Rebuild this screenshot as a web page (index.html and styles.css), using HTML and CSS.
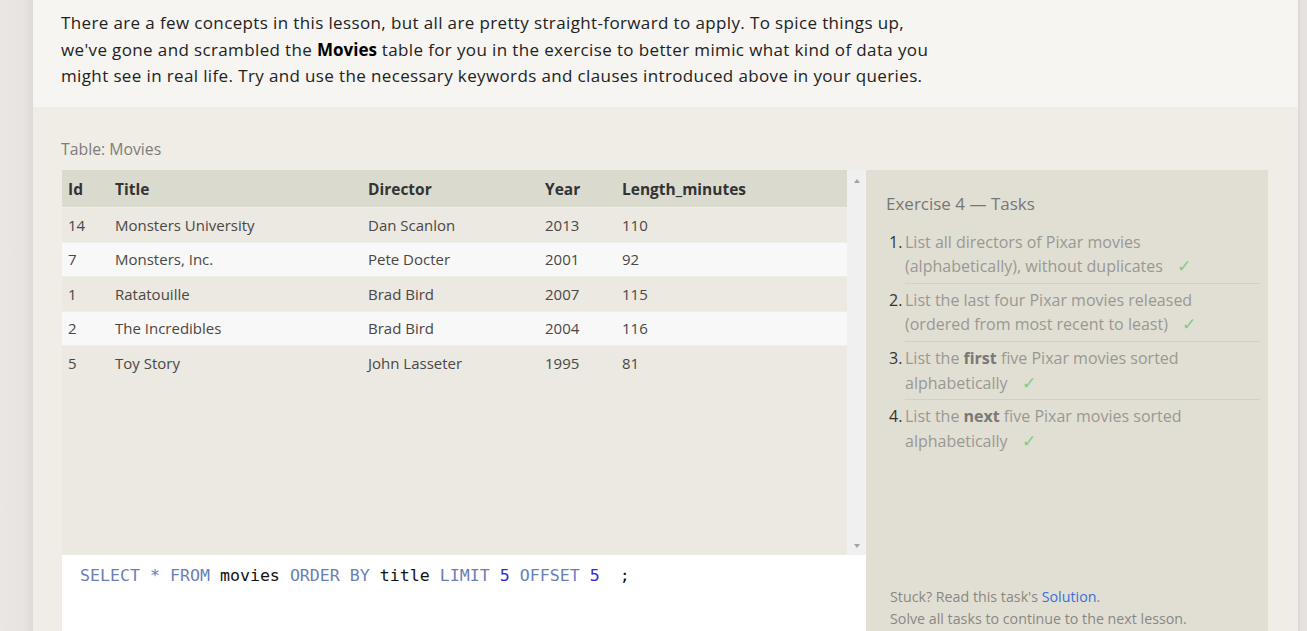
FILE: index.html
```html
<!DOCTYPE html>
<html lang="en">
<head>
<meta charset="utf-8">
<title>SQL Lesson</title>
<link rel="stylesheet" href="styles.css">
</head>
<body>
<div class="page">
  <div class="gutter-left"></div>
  <main class="card">
    <section class="intro">
      <p>There are a few concepts in this lesson, but all are pretty straight-forward to apply. To spice things up,<br>we've gone and scrambled the <strong>Movies</strong> table for you in the exercise to better mimic what kind of data you<br>might see in real life. Try and use the necessary keywords and clauses introduced above in your queries.</p>
    </section>
    <section class="exercise">
      <div class="table-label">Table: Movies</div>
      <div class="workspace">
        <div class="left">
          <div class="table-view">
            <div class="table-scroll">
              <table class="movies">
                <thead>
                  <tr><th class="c-id">Id</th><th class="c-title">Title</th><th class="c-dir">Director</th><th class="c-year">Year</th><th class="c-len">Length_minutes</th></tr>
                </thead>
                <tbody>
                  <tr><td>14</td><td>Monsters University</td><td>Dan Scanlon</td><td>2013</td><td>110</td></tr>
                  <tr><td>7</td><td>Monsters, Inc.</td><td>Pete Docter</td><td>2001</td><td>92</td></tr>
                  <tr><td>1</td><td>Ratatouille</td><td>Brad Bird</td><td>2007</td><td>115</td></tr>
                  <tr><td>2</td><td>The Incredibles</td><td>Brad Bird</td><td>2004</td><td>116</td></tr>
                  <tr><td>5</td><td>Toy Story</td><td>John Lasseter</td><td>1995</td><td>81</td></tr>
                </tbody>
              </table>
            </div>
            <div class="scrollbar">
              <span class="arrow up"></span>
              <span class="arrow down"></span>
            </div>
          </div>
          <div class="editor">
            <code><span class="kw">SELECT</span> <span class="kw">*</span> <span class="kw">FROM</span> <span class="id">movies</span> <span class="kw">ORDER</span> <span class="kw">BY</span> <span class="id">title</span> <span class="kw">LIMIT</span> <span class="num">5</span> <span class="kw">OFFSET</span> <span class="num">5</span>  <span class="id">;</span></code>
          </div>
        </div>
        <aside class="tasks">
          <h3 class="tasks-title">Exercise 4 — Tasks</h3>
          <ol class="task-list">
            <li><span class="n">1.</span><span class="t">List all directors of Pixar movies<br>(alphabetically), without duplicates<span class="check">✓</span></span></li>
            <li><span class="n">2.</span><span class="t">List the last four Pixar movies released<br>(ordered from most recent to least)<span class="check">✓</span></span></li>
            <li><span class="n">3.</span><span class="t">List the <b>first</b> five Pixar movies sorted<br>alphabetically<span class="check">✓</span></span></li>
            <li><span class="n">4.</span><span class="t">List the <b>next</b> five Pixar movies sorted<br>alphabetically<span class="check">✓</span></span></li>
          </ol>
          <div class="tasks-footer">
            <div>Stuck? Read this task's <a href="#">Solution</a>.</div>
            <div>Solve all tasks to continue to the next lesson.</div>
          </div>
        </aside>
      </div>
    </section>
  </main>
  <div class="gutter-right"></div>
</div>
</body>
</html>
```

FILE: styles.css
```css
html, body {
  margin: 0;
  padding: 0;
  height: 100%;
  overflow: hidden;
}
body {
  background: #e6e2df;
  font-family: "Open Sans", "Noto Sans", sans-serif;
  color: #222;
}
.page {
  display: flex;
  height: 631px;
}
.gutter-left {
  width: 33px;
  flex: none;
  background: linear-gradient(to right, #ebe7e5 0%, #e7e3e1 70%, #dedad7 100%);
}
.gutter-right {
  width: 9px;
  flex: none;
  background: linear-gradient(to right, #dcd8d5 0%, #e6e2df 40%);
}
.card {
  flex: 1;
  display: flex;
  flex-direction: column;
  background: #efede6;
}
.intro {
  background: #f6f5f2;
  padding: 10px 28px 17px 28px;
}
.intro p {
  margin: 0;
  font-size: 17px;
  line-height: 26.5px;
  color: #222;
  letter-spacing: 0.37px;
  white-space: nowrap;
}
.intro strong {
  color: #000;
  letter-spacing: 0;
}
.exercise {
  flex: 1;
  padding: 32px 30px 0 29px;
  display: flex;
  flex-direction: column;
}
.table-label {
  font-size: 15.8px;
  color: #7f7c79;
  line-height: 20px;
  margin: 0 0 11px -1px;
}
.workspace {
  flex: 1;
  display: flex;
}
.left {
  width: 804px;
  flex: none;
  display: flex;
  flex-direction: column;
}
.table-view {
  height: 385px;
  display: flex;
  background: #ebe9e2;
}
.table-scroll {
  flex: 1;
}
.scrollbar {
  width: 19px;
  flex: none;
  background: #f0f0f0;
  display: flex;
  flex-direction: column;
  justify-content: space-between;
  align-items: center;
  padding: 9px 0 7px;
  box-sizing: border-box;
}
.arrow {
  width: 0;
  height: 0;
  border-left: 3.5px solid transparent;
  border-right: 3.5px solid transparent;
}
.arrow.up {
  border-bottom: 4px solid #a3a3a3;
}
.arrow.down {
  border-top: 4px solid #a3a3a3;
}
.movies {
  width: 100%;
  border-collapse: collapse;
  font-size: 15px;
  color: #4a4745;
}
.movies th {
  background: #dbdacf;
  text-align: left;
  font-weight: 700;
  font-size: 15.5px;
  color: #333;
  height: 38px;
  padding: 1px 6px 0;
  box-sizing: border-box;
}
.movies td {
  height: 34.5px;
  padding: 0 6px;
  box-sizing: border-box;
  border-top: 1px solid #efeee9;
}
.movies tbody tr:nth-child(odd) td {
  background: #ebe9e2;
}
.movies tbody tr:nth-child(even) td {
  background: #f8f8f8;
}
.c-id { width: 47px; }
.c-title { width: 253px; }
.c-dir { width: 177px; }
.c-year { width: 77px; }
.editor {
  flex: 1;
  background: #fff;
  padding: 9px 18px;
}
.editor code {
  font-family: "DejaVu Sans Mono", monospace;
  font-size: 16.6px;
  white-space: pre;
  line-height: 22px;
}
.kw { color: #6a7fb4; }
.id { color: #111; }
.num { color: #2b2bd8; }
.tasks {
  flex: 1;
  background: #e1dfd4;
  padding: 22px 8px 0 20px;
  display: flex;
  flex-direction: column;
  color: #999;
}
.tasks-title {
  margin: 0 0 14px 0;
  font-size: 17px;
  font-weight: 400;
  color: #777;
  line-height: 24px;
}
.task-list {
  list-style: none;
  margin: 0;
  padding: 0;
  font-size: 16px;
}
.task-list li {
  display: flex;
  line-height: 24.5px;
  margin-bottom: 4.3px;
}
.task-list li .n {
  width: 16px;
  flex: none;
  padding-left: 3px;
  color: #333;
}
.task-list li .t {
  flex: 1;
  color: #9a9892;
  white-space: nowrap;
}
.task-list li + li .n {
  padding-top: 5px;
}
.task-list li + li .t {
  border-top: 1px solid #d2d0c6;
  padding-top: 4px;
}
.task-list b {
  color: #7a7874;
}
.check {
  display: inline-block;
  color: #7dce86;
  margin-left: 14px;
  font-size: 17px;
}
.tasks-footer {
  margin-top: auto;
  padding: 0 0 1px 4px;
  font-size: 14.25px;
  line-height: 22px;
  color: #8a8782;
}
.tasks-footer a {
  color: #3a6fd8;
  text-decoration: none;
}
```
